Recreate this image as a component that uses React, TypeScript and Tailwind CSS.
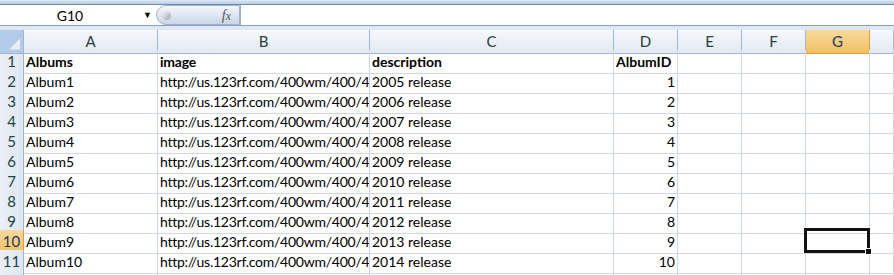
import React from "react";

const columns = ["A", "B", "C", "D", "E", "F", "G", "H"];

const rows: string[][] = [
	["Albums", "image", "description", "AlbumID"],
	...Array.from({ length: 10 }, (_, i) => [
		`Album${i + 1}`,
		"http://us.123rf.com/400wm/400/4",
		`${2005 + i} release`,
		String(i + 1),
	]),
];

const gridCols = "grid grid-cols-[24px_134px_212px_244px_64px_64px_64px_64px_1fr]";

export default function App() {
	return (
		<div
			className="w-[894px] h-[275px] overflow-hidden bg-white text-[14px] text-black"
			style={{ fontFamily: "Lato, 'Noto Sans', sans-serif" }}
		>
			{/* Top band */}
			<div className="h-[4px] bg-gradient-to-b from-[#dbe8f6] to-[#b7cde6]" />
			<div className="h-px bg-[#6f8db3]" />

			{/* Formula bar */}
			<div className="flex h-[20px] items-stretch bg-white">
				<div className="relative flex w-[156px] items-center">
					<span className="w-[140px] text-center text-[14px]">G10</span>
					<span className="absolute left-[143px] top-[5px] text-[9px] leading-none">▼</span>
				</div>
				<div className="relative flex w-[84px] items-center justify-end rounded-l-full border border-[#9fb3cc] bg-gradient-to-b from-[#f4f7fb] to-[#c9d7ea] pr-[8px]">
					<span className="absolute left-[5px] top-[5px] h-[9px] w-[9px] rounded-full bg-gradient-to-br from-[#f5f5f5] to-[#a0a8b4]" />
					<span
						className="text-[14px] italic text-[#555]"
						style={{ fontFamily: "'Liberation Serif', serif" }}
					>
						f<span className="text-[12px]">x</span>
					</span>
				</div>
				<div className="flex-1 border-l border-[#9fb3cc] bg-white" />
			</div>
			<div className="h-px bg-[#8aa0bd]" />
			<div className="h-[4px] bg-[#dfe7f2]" />

			{/* Column headers */}
			<div className={`${gridCols} h-[20px] text-[15px]`}>
				<div className="relative border-r border-b border-[#9eb6ce] bg-[#b3cbe8]">
					<div className="absolute bottom-[3px] right-[3px] h-[11px] w-[11px] bg-[#e6eef8] [clip-path:polygon(100%_0,100%_100%,0_100%)]" />
				</div>
				{columns.map((c) => (
					<div
						key={c}
						className={
							c === "G"
								? "flex items-center justify-center border-r border-b border-[#f29536] bg-gradient-to-b from-[#f9d99f] to-[#f1c15f] text-[#1e395b]"
								: "flex items-center justify-center border-r border-b border-[#9eb6ce] bg-gradient-to-b from-[#f6f8fb] to-[#e2e9f3] text-[#27413e]"
						}
					>
						{c === "H" ? "" : c}
					</div>
				))}
			</div>

			{/* Rows */}
			{rows.map((r, i) => {
				const rowNum = i + 1;
				const active = rowNum === 10;
				return (
					<div key={i} className={`${gridCols} h-[20px]`}>
						<div
							className={
								active
									? "flex items-center justify-center border-r border-b border-[#f29536] bg-gradient-to-b from-[#f9d99f] to-[#f1c15f] text-[15px] text-[#1e395b]"
									: "flex items-center justify-center border-r border-b border-[#9eb6ce] bg-gradient-to-r from-[#eaf0f8] to-[#dde6f1] text-[15px] text-[#27413e]"
							}
						>
							{rowNum}
						</div>
						{columns.map((c, ci) => {
							const v = r[ci] ?? "";
							const bold = i === 0;
							const numeric = ci === 3 && i > 0;
							return (
								<div
									key={c}
									className={`relative flex items-center whitespace-nowrap border-r border-b border-[#d0d7e5] px-[2px] ${
										ci === 1 ? "overflow-hidden tracking-[-0.25px]" : ""
									} ${numeric ? "justify-end" : ""} ${bold ? "font-bold" : ""}`}
								>
									{v}
									{active && c === "G" && (
										<div className="absolute -left-[2px] -top-[2px] -right-px bottom-0 z-10 border-[3px] border-[#111]">
											<div className="absolute -right-[5px] -bottom-[5px] h-[7px] w-[7px] border border-white bg-[#111]" />
										</div>
									)}
								</div>
							);
						})}
					</div>
				);
			})}

			{/* Partial next row */}
			<div className={`${gridCols} h-[20px]`}>
				<div className="border-r border-[#9eb6ce] bg-gradient-to-r from-[#eaf0f8] to-[#dde6f1]" />
				{columns.map((c) => (
					<div key={c} className="border-r border-[#d0d7e5]" />
				))}
			</div>
		</div>
	);
}
